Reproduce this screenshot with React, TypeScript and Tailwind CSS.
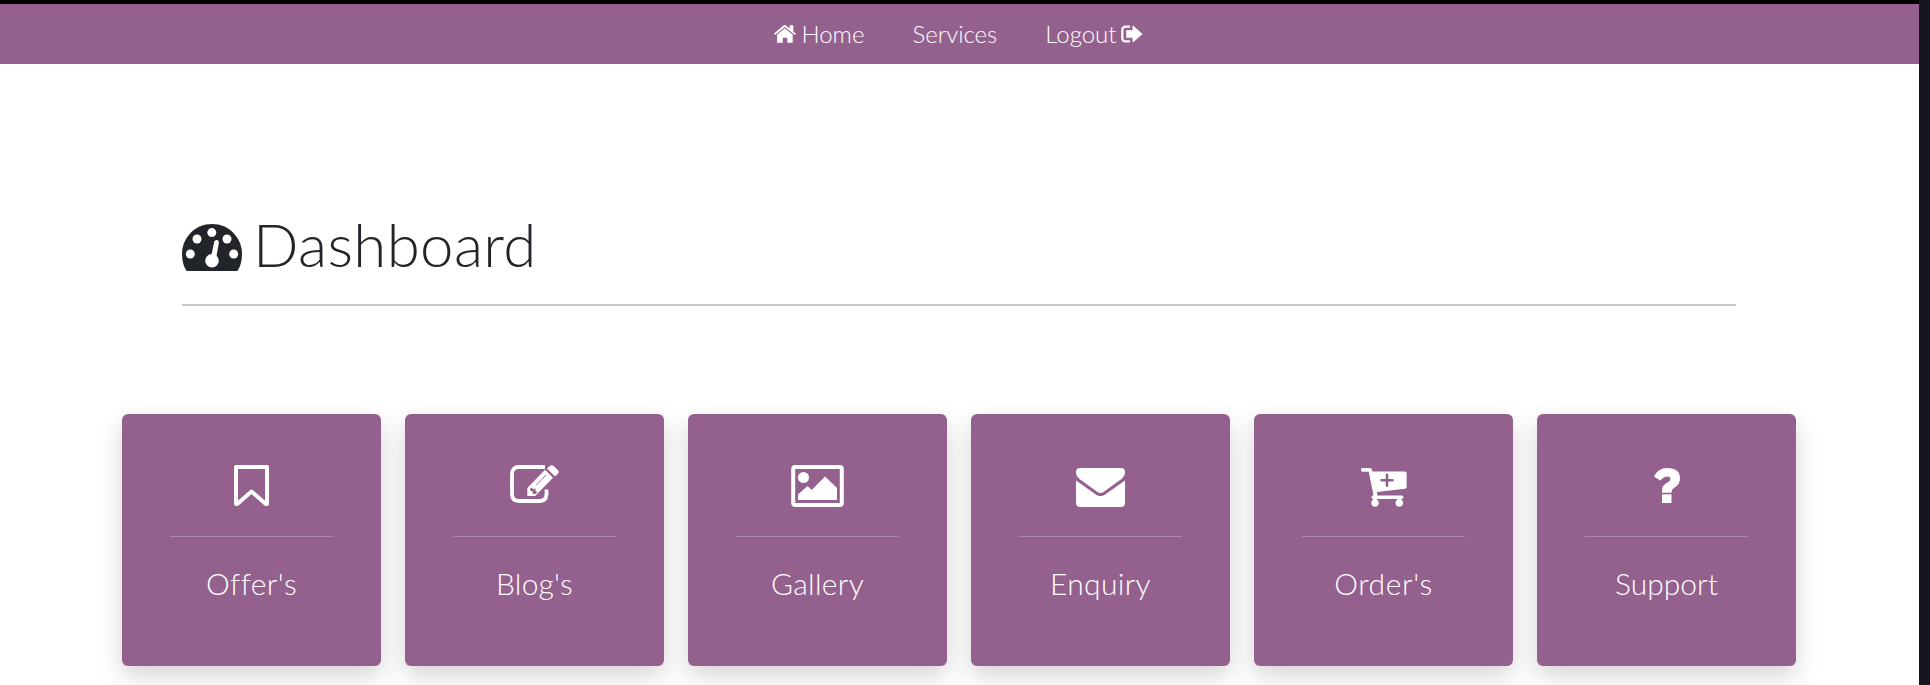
import React from "react";

function HomeIcon() {
  return (
    <svg className="h-[18px] w-[22px]" viewBox="0 0 22 18" fill="currentColor">
      <path d="M0 8.600 9.200.700q1.600-1.300 3.200 0l3.300 2.700V.300h3.600v6.300L22 8.800 20.900 10 10.900 1.900 1.100 9.900Z" />
      <path d="M3 9.700 10.900 3.300 18.700 9.700V17.800h-5.400v-5H8.700v5H3Z" />
    </svg>
  );
}

function LogoutIcon() {
  return (
    <svg className="h-[18px] w-[22px]" viewBox="0 0 22 18">
      <path d="M9 1.600H5Q1.300 1.600 1.300 5.300v7.400q0 3.700 3.700 3.700h4" fill="none" stroke="currentColor" strokeWidth="2.300" />
      <path d="M5.200 5.300h6.300V1.500q.1-1.300 1.100-.5L21.500 9l-8.900 8q-1 .8-1.100-.5v-3.800H5.200Z" fill="currentColor" />
    </svg>
  );
}

function GaugeIcon() {
  return (
    <svg className="h-[47px] w-[60px]" viewBox="0 0 60 47">
      <path d="M30 0C13.400 0 0 13.400 0 30c0 6.200 1.300 12.200 4.600 17h50.800C58.700 42.200 60 36.200 60 30 60 13.400 46.600 0 30 0Z" fill="#212529" />
      <g fill="#fff">
        <circle cx="8.300" cy="30" r="4.500" />
        <circle cx="15" cy="15" r="4.500" />
        <circle cx="29.800" cy="8.600" r="4.500" />
        <circle cx="45" cy="15" r="4.500" />
        <circle cx="51.700" cy="30" r="4.500" />
        <circle cx="30" cy="36.700" r="6.800" />
        <path d="m29 33 3.300-15.500q.8-1.900 2.700-1.500 2 .5 1.900 2.600L34 35Z" />
      </g>
    </svg>
  );
}

function BookmarkIcon() {
  return (
    <svg className="h-[42px] w-[35px]" viewBox="0 0 35 42" fill="none" stroke="currentColor" strokeWidth="4" strokeLinejoin="round">
      <path d="M2 2h31v37h-1.200L17.500 26.500 3.200 39H2Z" />
    </svg>
  );
}

function EditIcon() {
  return (
    <svg className="h-[39px] w-[49px]" viewBox="0 0 49 39">
      <path d="M35 2H9Q2 2 2 9v20q0 7 7 7h20.500q7 0 7-7v-4.500" fill="none" stroke="currentColor" strokeWidth="3.800" />
      <path d="M17.300 23 35 4.800l8 8L25.200 31h-7.900Z" fill="currentColor" stroke="#94618E" strokeWidth="1.600" paintOrder="stroke" />
      <path d="m37 3.600 2.800-2.700q1.900-1.500 3.800 0l4.200 4.200q1.700 1.800 0 3.700L45 11.600Z" fill="currentColor" />
      <path d="m26.200 20 9.800-10" stroke="#94618E" strokeWidth=".9" />
      <path d="m20 24 1.500-1.700 1.700 1.900 2.500-.7-.3 2.300 2 1.700-2.300 1.500h-2.500l.3-2.200-2.200-1Z" fill="#94618E" />
    </svg>
  );
}

function ImageIcon() {
  return (
    <svg className="h-[42px] w-[53px]" viewBox="0 0 53 42">
      <rect x="2.200" y="2" width="48.600" height="38" rx="2" fill="none" stroke="currentColor" strokeWidth="4" />
      <circle cx="12.500" cy="12.500" r="5.500" fill="currentColor" />
      <path d="M7 35v-5.500l9.500-8.500 4.200 4L34 11.500 46 23v12Z" fill="currentColor" />
    </svg>
  );
}

function EnvelopeIcon() {
  return (
    <svg className="h-[39px] w-[49px]" viewBox="0 0 49 39" fill="currentColor">
      <path d="M4 0h41q4 0 4 4v1q0 3-3.500 6L27.500 24q-3 2-6 0L3.500 11Q0 8 0 5V4Q0 0 4 0Z" />
      <path d="M0 12.500 20.500 27q4 2.300 8 0L49 12.500V35q0 4-4 4H4q-4 0-4-4Z" />
    </svg>
  );
}

function CartIcon() {
  return (
    <svg className="h-[39px] w-[46px]" viewBox="0 0 46 39" fill="currentColor">
      <path d="M1.800 0H9q1.500 0 1.900 1.500l.5 2H44q1.600 0 1.600 1.600v14q0 1.500-1.500 1.700L15.900 24l.4 3.500h24.400a1.800 1.800 0 0 1 0 3.600H12.200q-1.700 0-1.700-1.800t2-2L7.700 3.700H1.800a1.850 1.850 0 0 1 0-3.700Z" />
      <circle cx="14" cy="35" r="3.700" />
      <circle cx="38.300" cy="35" r="3.700" />
      <path d="M12 29h4v4h-4ZM36.300 29h4v4h-4Z" />
      <path d="M26 6.900v10.800M20.500 12.300h11" stroke="#94618E" strokeWidth="2.600" strokeLinecap="round" />
    </svg>
  );
}

function QuestionIcon() {
  return (
    <svg className="h-[35px] w-[26px]" viewBox="0 0 26 35" fill="currentColor">
      <path d="M0 8.500Q4 0 13 0q13 0 13 10.500 0 6-5.500 9-3 1.700-3 4.500v.8H8v-2.500q0-4.800 4.500-7.300 4-2 4-4.300 0-2.200-3.300-2.200-3 0-7 4Z" />
      <path d="M8 26.300h9.500V35H8Z" />
    </svg>
  );
}

const cards = [
  { label: "Offer's", icon: <BookmarkIcon />, pad: "pt-[51px]", tracking: "tracking-[0.4px]" },
  { label: "Blog's", icon: <EditIcon />, pad: "pt-[51px]", tracking: "tracking-[0.2px]" },
  { label: "Gallery", icon: <ImageIcon />, pad: "pt-[51px]", tracking: "tracking-[0.3px]" },
  { label: "Enquiry", icon: <EnvelopeIcon />, pad: "pt-[54px]", tracking: "tracking-[0.3px]" },
  { label: "Order's", icon: <CartIcon />, pad: "pt-[54px]", tracking: "tracking-[0.6px]" },
  { label: "Support", icon: <QuestionIcon />, pad: "pt-[54px]", tracking: "tracking-normal" },
];

export default function App() {
  return (
    <div className="flex h-[685px] w-[1930px] overflow-hidden bg-[#17151f] font-['Lato',sans-serif] font-light">
      <div className="w-[1919px] bg-white">
        <nav className="flex h-16 items-start justify-center gap-12 border-t-4 border-black bg-[#94618E] pt-[12px] pr-[2px] text-2xl leading-[36px] text-white">
          <a className="flex items-center gap-[5px]"><HomeIcon />Home</a>
          <a>Services</a>
          <a className="flex items-center gap-1">Logout<LogoutIcon /></a>
        </nav>
        <header className="mt-[146px] ml-[182px] flex h-[96px] w-[1554px] items-start gap-[11px] border-b-2 border-[#c8c8c8] text-[#212529]">
          <div className="pt-[14px]"><GaugeIcon /></div>
          <h1 className="-mt-[2px] text-[60px] leading-[72px] tracking-[0.35px]">Dashboard</h1>
        </header>
        <main className="mt-[108px] ml-[122px] grid w-[1674px] grid-cols-6 gap-6">
          {cards.map((c) => (
            <section key={c.label} className="flex h-[252px] flex-col items-center rounded-md bg-[#94618E] text-white shadow-[0_10px_24px_rgba(0,0,0,0.17)]">
              <div className={"h-[122px] " + c.pad}>{c.icon}</div>
              <div className="h-px w-[163px] bg-white/25" />
              <h2 className={"mt-[28px] text-[30px] leading-[36px] " + c.tracking}>{c.label}</h2>
            </section>
          ))}
        </main>
      </div>
    </div>
  );
}
